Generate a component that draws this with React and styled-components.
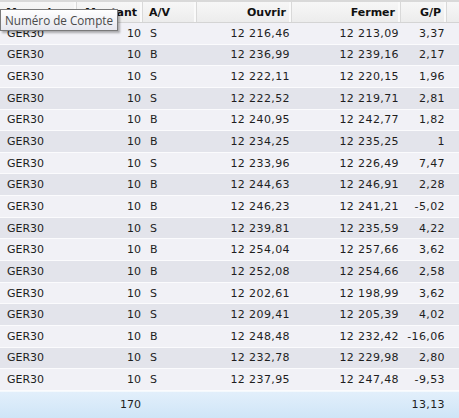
import React from 'react';
import styled, { createGlobalStyle } from 'styled-components';

const GlobalStyle = createGlobalStyle`
body{
  margin:0;
  background:#fff;
  font-family:"DejaVu Sans", Verdana, sans-serif;
}
`

const COLS = '77px 66px 54px 95px 109px 46px 1fr';

const Grid = styled.div`
position:relative;
width:459px;
height:418px;
overflow:hidden;
font-size:11px;
color:#1e1e1e;
`
const HeaderRow = styled.div`
display:grid;
grid-template-columns:${COLS};
height:23px;
box-sizing:border-box;
border-top:2px solid #d9d9d9;
border-bottom:1px solid #d4d4d4;
background:linear-gradient(#f7f7f7, #ececec);
`
const HeadCell = styled.div`
display:flex;
align-items:center;
justify-content:${p => (p.$right ? 'flex-end' : 'flex-start')};
padding:${p => (p.$right ? '0 5px 0 0' : '0 0 0 6px')};
font-weight:bold;
color:#111;
border-right:${p => (p.$last ? 'none' : '1px solid #d9d9d9')};
box-shadow:${p => (p.$last ? 'none' : 'inset -2px 0 0 #fafafa')};
white-space:nowrap;
overflow:hidden;
`
const Row = styled.div`
display:grid;
grid-template-columns:${COLS};
height:21.65px;
box-sizing:border-box;
border-bottom:1px solid #fbfbfd;
background:${p => (p.$alt ? '#e3e4eb' : '#f1f1f6')};
`
const Cell = styled.div`
display:flex;
align-items:center;
justify-content:${p => (p.$right ? 'flex-end' : 'flex-start')};
padding:${p => (p.$right ? '0 2px 0 0' : '0 0 0 7px')};
white-space:nowrap;
letter-spacing:${p => (p.$num ? '0.4px' : '0')};
`
const Footer = styled.div`
display:grid;
grid-template-columns:${COLS};
height:26px;
border-top:1px solid #f4f9fd;
background:linear-gradient(#e2effb, #cfe5f7);
`
const Tooltip = styled.div`
position:absolute;
left:0;
top:9px;
width:118px;
height:22px;
box-sizing:border-box;
border:1px solid #7a7a7a;
background:linear-gradient(#ffffff, #e6e7ef);
box-shadow:2px 2px 2px rgba(0,0,0,0.3);
font-family:"Open Sans", "Noto Sans", sans-serif;
font-size:11.7px;
color:#4a4a4a;
display:flex;
align-items:center;
padding-left:4px;
white-space:nowrap;
`

const rows = [
  ['S', '12 216,46', '12 213,09', '3,37'],
  ['B', '12 236,99', '12 239,16', '2,17'],
  ['S', '12 222,11', '12 220,15', '1,96'],
  ['S', '12 222,52', '12 219,71', '2,81'],
  ['B', '12 240,95', '12 242,77', '1,82'],
  ['B', '12 234,25', '12 235,25', '1'],
  ['S', '12 233,96', '12 226,49', '7,47'],
  ['B', '12 244,63', '12 246,91', '2,28'],
  ['B', '12 246,23', '12 241,21', '-5,02'],
  ['S', '12 239,81', '12 235,59', '4,22'],
  ['B', '12 254,04', '12 257,66', '3,62'],
  ['B', '12 252,08', '12 254,66', '2,58'],
  ['S', '12 202,61', '12 198,99', '3,62'],
  ['S', '12 209,41', '12 205,39', '4,02'],
  ['B', '12 248,48', '12 232,42', '-16,06'],
  ['S', '12 232,78', '12 229,98', '2,80'],
  ['S', '12 237,95', '12 247,48', '-9,53'],
];

const App = () => {
  return (<>
    <GlobalStyle />
    <Grid>
      <HeaderRow>
        <HeadCell>Monnaie</HeadCell>
        <HeadCell $right>Montant</HeadCell>
        <HeadCell>A/V</HeadCell>
        <HeadCell $right>Ouvrir</HeadCell>
        <HeadCell $right>Fermer</HeadCell>
        <HeadCell $right>G/P</HeadCell>
        <HeadCell $last />
      </HeaderRow>
      {rows.map((r, i) => (
        <Row key={i} $alt={i % 2 === 1}>
          <Cell>GER30</Cell>
          <Cell $right>10</Cell>
          <Cell>{r[0]}</Cell>
          <Cell $right $num>{r[1]}</Cell>
          <Cell $right $num>{r[2]}</Cell>
          <Cell $right $num>{r[3]}</Cell>
          <Cell />
        </Row>
      ))}
      <Footer>
        <Cell />
        <Cell $right>170</Cell>
        <Cell />
        <Cell />
        <Cell />
        <Cell $right $num>13,13</Cell>
        <Cell />
      </Footer>
      <Tooltip>Numéro de Compte</Tooltip>
    </Grid>
  </>
  )
}

export default App;
